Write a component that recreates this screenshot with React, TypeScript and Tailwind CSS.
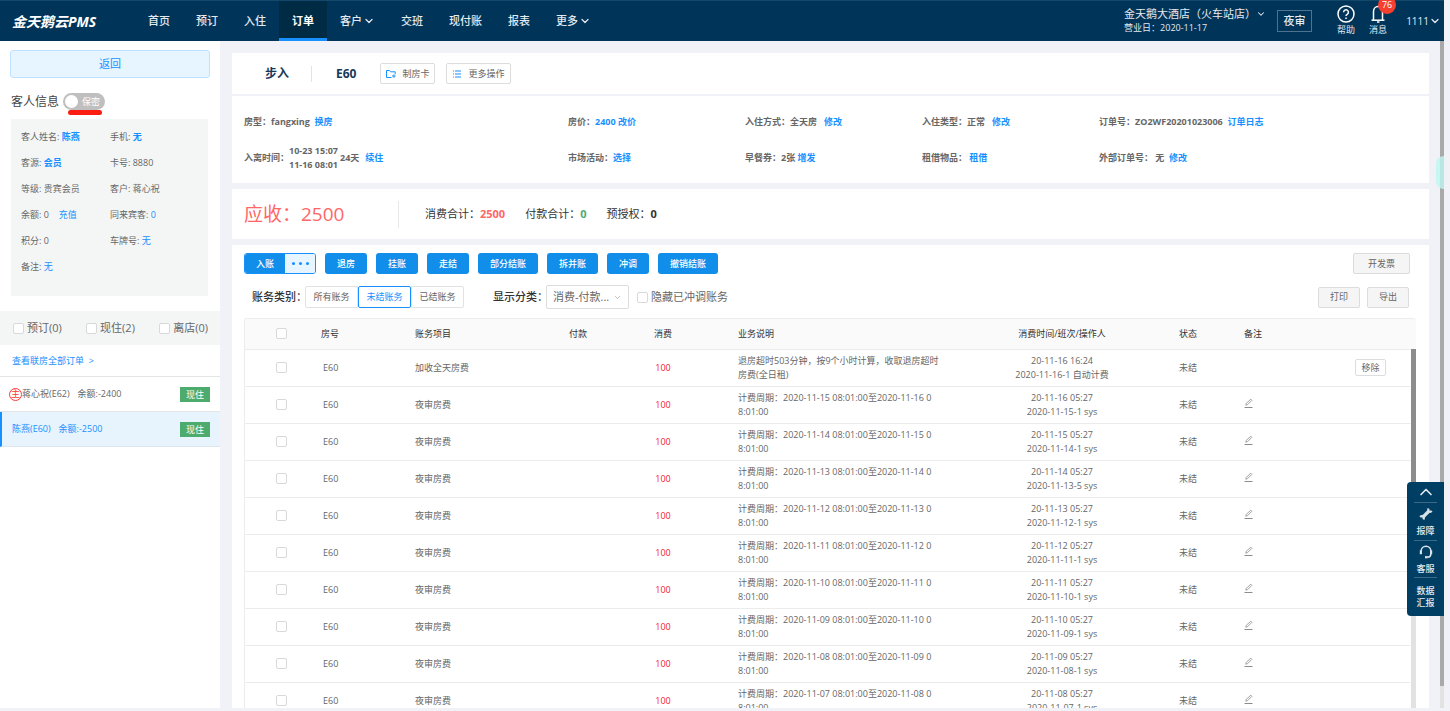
import type { ReactNode } from "react";
import { ChevronDown, ChevronUp } from "lucide-react";

type NavItem = { label: string; active?: boolean; more?: boolean };

const navItems: NavItem[] = [
  { label: "首页" },
  { label: "预订" },
  { label: "入住" },
  { label: "订单", active: true },
  { label: "客户", more: true },
  { label: "交班" },
  { label: "现付账" },
  { label: "报表" },
  { label: "更多", more: true },
];

const actions = ["退房", "挂账", "走结", "部分结账", "拆并账", "冲调", "撤销结账"];

const bills = [
  {
    item: "加收全天房费",
    note: "退房超时503分钟，按9个小时计算，收取退房超时\n房费(全日租)",
    time: "20-11-16 16:24",
    shift: "2020-11-16-1 自动计费",
    removable: true,
  },
  ...[
    ["15", "16", "20-11-16 05:27", "2020-11-15-1 sys"],
    ["14", "15", "20-11-15 05:27", "2020-11-14-1 sys"],
    ["13", "14", "20-11-14 05:27", "2020-11-13-5 sys"],
    ["12", "13", "20-11-13 05:27", "2020-11-12-1 sys"],
    ["11", "12", "20-11-12 05:27", "2020-11-11-1 sys"],
    ["10", "11", "20-11-11 05:27", "2020-11-10-1 sys"],
    ["09", "10", "20-11-10 05:27", "2020-11-09-1 sys"],
    ["08", "09", "20-11-09 05:27", "2020-11-08-1 sys"],
    ["07", "08", "20-11-08 05:27", "2020-11-07-1 sys"],
  ].map(([from, to, time, shift]) => ({
    item: "夜审房费",
    note: `计费周期：2020-11-${from} 08:01:00至2020-11-${to} 0\n8:01:00`,
    time,
    shift,
    removable: false,
  })),
];

function Check({ label }: { label: string }) {
  return (
    <input
      type="checkbox"
      aria-label={label}
      className="block size-[11px] shrink-0 appearance-none rounded-[2px] border border-[#d9d9d9] bg-white checked:bg-[#1890ff]"
    />
  );
}

function Action({ children, strong }: { children: ReactNode; strong?: boolean }) {
  return (
    <a href="#" className={strong ? "font-bold text-[#1890ff]" : "text-[#1890ff]"}>
      {children}
    </a>
  );
}

function EditIcon() {
  return (
    <svg viewBox="0 0 9 10" className="h-[10px] w-[9px]" fill="none" stroke="#8c8c8c" strokeWidth="0.8">
      <path d="M0.5 9.5h8" strokeWidth="1" />
      <path d="M1.8 7.2l.4-1.8 4.6-4.2 1.1 1.1-4.4 4.4z" />
    </svg>
  );
}

function Header() {
  return (
    <header className="flex h-[41px] shrink-0 items-stretch border-t border-[#14486b] bg-[#003459] pr-[3px] text-[#e3eaf0]">
      <div className="flex w-[135px] shrink-0 items-center pl-3 text-[14px] font-bold italic text-white">
        金天鹅云PMS
      </div>
      <nav className="flex" aria-label="主导航">
        {navItems.map((item) => (
          <a
            key={item.label}
            href="#"
            className={
              item.active
                ? "flex items-center border-b-[3px] border-[#1890ff] bg-[#002b45] px-[13px] pt-[3px] text-[11px] font-bold text-white"
                : "flex items-center px-[13px] text-[11px] font-medium"
            }
          >
            {item.label}
            {item.more ? <ChevronDown size={12} strokeWidth={2.5} className="ml-px" /> : null}
          </a>
        ))}
      </nav>
      <div className="ml-auto flex items-center">
        <div className="mr-[11px] leading-[14px]">
          <a href="#" className="flex items-center text-[11px]">
            金天鹅大酒店（火车站店）
            <ChevronDown size={10} strokeWidth={2.5} />
          </a>
          <p className="text-[9px]">营业日：2020-11-17</p>
        </div>
        <button type="button" className="h-[22px] w-[35px] border border-[#4d7390] text-[11px] font-medium">
          夜审
        </button>
        <a href="#" className="ml-[25px] flex flex-col items-center text-[9px] leading-[14px]">
          <svg viewBox="0 0 18 18" className="size-[18px]" fill="none" stroke="white" strokeWidth="1.5">
            <circle cx="9" cy="9" r="8" />
            <path d="M6.6 7.2a2.4 2.4 0 1 1 3.6 2.1c-.9.5-1.2.9-1.2 1.8" />
            <path d="M9 12.4v1.6" />
          </svg>
          帮助
        </a>
        <a href="#" className="relative ml-[14px] flex flex-col items-center text-[9px] leading-[14px]">
          <svg viewBox="0 0 18 18" className="size-[18px]" fill="none" stroke="white" strokeWidth="1.5">
            <path d="M4.5 15V6.5a4.5 5 0 0 1 9 0V15" />
            <path d="M2.5 15.2h13" />
            <path d="M8 17h2.5" />
          </svg>
          消息
          <span className="absolute -top-[9px] left-[9px] flex h-[18px] w-[18px] items-center justify-center rounded-full bg-[#f5402f] text-[9px] text-white">
            76
          </span>
        </a>
        <a href="#" className="ml-[19px] flex items-center text-[10px]">
          1111
          <ChevronDown size={12} strokeWidth={2.5} />
        </a>
      </div>
    </header>
  );
}

function Guest() {
  return (
    <dl className="mt-2 mr-3 ml-[11px] grid h-[177px] grid-cols-[89px_1fr] content-start bg-[#f4f6f6] pt-[5px] pl-[10px] leading-[26px]">
      <div>客人姓名: <Action strong>陈燕</Action></div>
      <div>手机: <Action strong>无</Action></div>
      <div>客源: <Action strong>会员</Action></div>
      <div>卡号: 8880</div>
      <div>等级: 贵宾会员</div>
      <div>客户: 蒋心祝</div>
      <div className="flex gap-[10px]">余额: 0 <Action>充值</Action></div>
      <div>同来宾客: <Action>0</Action></div>
      <div>积分: 0</div>
      <div>车牌号: <Action>无</Action></div>
      <div>备注: <Action>无</Action></div>
    </dl>
  );
}

function Sidebar() {
  return (
    <aside className="w-[220px] shrink-0 bg-white text-[9px] text-[#666]">
      <div className="px-[10px] pt-[9px]">
        <button
          type="button"
          className="h-7 w-full rounded-[3px] border border-[#bfe1ff] bg-[#e6f5ff] text-[11px] text-[#1890ff]"
        >
          返回
        </button>
      </div>
      <div className="mt-[14px] flex h-[19px] items-center pl-[11px] text-[12px] text-[#444]">
        客人信息
        <button
          type="button"
          role="switch"
          aria-checked="false"
          className="relative ml-1 flex h-[17px] w-[42px] items-center rounded-full bg-[#bfbfbf] pl-[2px] text-[9px] text-white"
        >
          <span className="mr-1 size-[13px] rounded-full bg-white" />
          保密
          <span className="absolute top-[17px] left-[5px] h-[5px] w-[34px] rounded-full bg-[#fb1d12]" />
        </button>
      </div>
      <Guest />
      <div className="mt-[15px] flex h-[34px] items-center justify-between bg-[#f4f6f6] pr-3 pl-[13px] text-[11px]">
        {["预订(0)", "现住(2)", "离店(0)"].map((name) => (
          <label key={name} className="flex items-center gap-[3px]">
            <Check label={name} />
            {name}
          </label>
        ))}
      </div>
      <a href="#" className="flex h-8 items-center border-b border-[#e4e6e6] pl-3 text-[#1890ff]">
        查看联房全部订单 &nbsp;&gt;
      </a>
      <a href="#" className="flex h-[35px] items-center border-b border-[#e4e6e6] pr-[10px] pl-[9px]">
        <span className="flex size-[13px] items-center justify-center rounded-full border border-[#ff3b3b] text-[#ff3b3b]">
          主
        </span>
        蒋心祝(E62)
        <span className="ml-2">余额:-2400</span>
        <span className="ml-auto bg-[#4dab6d] px-[6px] leading-[15px] text-white">现住</span>
      </a>
      <a
        href="#"
        className="flex h-[35px] items-center border-b border-l-2 border-b-[#dde6ec] border-l-[#1890ff] bg-[#e8f4fd] pr-[10px] pl-[10px] text-[#1890ff]"
      >
        陈燕(E60)
        <span className="ml-2">余额:-2500</span>
        <span className="ml-auto bg-[#4dab6d] px-[6px] leading-[15px] text-white">现住</span>
      </a>
    </aside>
  );
}

function OrderTitle() {
  return (
    <section className="flex h-[41px] items-center bg-white pl-[33px] text-[12px] font-bold text-[#17395a]">
      <h1>步入</h1>
      <span className="mr-6 ml-[22px] h-4 w-px bg-[#e3e3e3]" />
      <span>E60</span>
      <button
        type="button"
        className="ml-6 flex h-[21px] items-center gap-[6px] rounded-[2px] border border-[#ddd] px-[5px] text-[9px] font-normal text-[#666]"
      >
        <svg viewBox="0 0 10 10" className="size-[10px]" fill="none" stroke="#1890ff" strokeWidth="1">
          <path d="M5.5 8.5h-5v-7h3l1 1.3h4.7v2.4" />
          <path d="M6 7h3.5M8 5.5v3.3" />
        </svg>
        制房卡
      </button>
      <button
        type="button"
        className="ml-[11px] flex h-[21px] items-center gap-[6px] rounded-[2px] border border-[#ddd] px-[5px] text-[9px] font-normal text-[#666]"
      >
        <svg viewBox="0 0 10 10" className="size-[10px]" fill="none" stroke="#1890ff" strokeWidth="1">
          <path d="M3 2h6M3 5h6M3 8h6" />
          <path d="M1 2h1M1 5h1M1 8h1" />
        </svg>
        更多操作
      </button>
    </section>
  );
}

function OrderInfo() {
  return (
    <section className="mt-[2px] grid h-[87px] grid-cols-[324fr_177fr_177fr_177fr_318fr] grid-rows-2 content-center items-center bg-white px-3 py-[7px] text-[9px] font-bold text-[#666]">
      <div>房型：fangxing &nbsp;<Action>换房</Action></div>
      <div>房价：<Action>2400 改价</Action></div>
      <div>入住方式：全天房 &nbsp; <Action>修改</Action></div>
      <div>入住类型：正常 &nbsp; <Action>修改</Action></div>
      <div>订单号：ZO2WF20201023006 &nbsp;<Action>订单日志</Action></div>
      <div className="flex items-center">
        入离时间：
        <span className="leading-[14px]">
          10-23 15:07
          <br />
          11-16 08:01
        </span>
        <span className="mr-[6px] ml-[2px]">24天</span>
        <Action>续住</Action>
      </div>
      <div>市场活动：<Action>选择</Action></div>
      <div>早餐券：2张 <Action>增发</Action></div>
      <div>租借物品： <Action>租借</Action></div>
      <div>外部订单号： 无 &nbsp;<Action>修改</Action></div>
    </section>
  );
}

function Totals() {
  return (
    <section className="mt-[6px] flex h-[50px] items-center bg-white pl-3 text-[11px] text-[#333]">
      <p className="w-[154px] text-[19px] text-[#ff6666]">应收：2500</p>
      <span className="mr-[26px] h-[27px] w-px bg-[#e8e8e8]" />
      <p>消费合计：<b className="text-[#ff6666]">2500</b></p>
      <p className="ml-5">付款合计：<b className="text-[#4dab6d]">0</b></p>
      <p className="ml-5">预授权：<b>0</b></p>
    </section>
  );
}

function BillTable() {
  return (
    <div className="relative mt-[9px] min-h-0 flex-1 overflow-hidden rounded-t-[3px] border-t border-l border-[#ececec]">
      <table className="w-full table-fixed border-collapse text-[9px] text-[#666]">
        <colgroup>
          <col className="w-[72px]" />
          <col className="w-[98px]" />
          <col className="w-[120px]" />
          <col className="w-[86px]" />
          <col className="w-[84px]" />
          <col />
          <col className="w-[204px]" />
          <col className="w-[48px]" />
          <col className="w-[82px]" />
          <col className="w-[122px]" />
        </colgroup>
        <thead>
          <tr className="h-[30px] border-b border-[#ececec] bg-[#fafafa] text-[#333] [&>th]:font-normal">
            <th><div className="flex justify-center"><Check label="全选" /></div></th>
            <th className="pl-1 text-left">房号</th>
            <th className="text-left">账务项目</th>
            <th>付款</th>
            <th>消费</th>
            <th className="pl-[33px] text-left">业务说明</th>
            <th>消费时间/班次/操作人</th>
            <th>状态</th>
            <th>备注</th>
            <th aria-label="操作" />
          </tr>
        </thead>
        <tbody>
          {bills.map((bill) => (
            <tr key={bill.time} className="h-[37px] border-b border-[#ececec] leading-[14px]">
              <td><div className="flex justify-center"><Check label={bill.time} /></div></td>
              <td className="pl-[6px]">E60</td>
              <td>{bill.item}</td>
              <td />
              <td className="text-center text-[#f5222d]">100</td>
              <td className="pl-[33px] whitespace-pre">{bill.note}</td>
              <td className="text-center">
                {bill.time}
                <br />
                {bill.shift}
              </td>
              <td className="text-center">未结</td>
              <td>
                {bill.removable ? null : (
                  <button type="button" aria-label="编辑备注" className="mb-1 ml-8 block">
                    <EditIcon />
                  </button>
                )}
              </td>
              <td className="pr-[30px] text-right">
                {bill.removable ? (
                  <button type="button" className="h-[17px] w-[31px] rounded-[2px] border border-[#ddd]">
                    移除
                  </button>
                ) : null}
              </td>
            </tr>
          ))}
        </tbody>
      </table>
      <div className="absolute top-[30px] right-0 bottom-0 w-[5px] bg-[#e2e2e2]">
        <div className="h-[150px] bg-[#8c8c8c]" />
      </div>
    </div>
  );
}

function Bills() {
  return (
    <section className="mt-[6px] flex min-h-0 flex-1 flex-col bg-white pt-2 pr-[13px] pl-3 text-[9px]">
      <div className="flex items-center gap-[9px] pr-[6px]">
        <div className="flex h-[21px] w-[72px] overflow-hidden rounded-[3px] border border-[#1890ff]">
          <button type="button" className="w-10 bg-[#108ee9] font-medium text-white">入账</button>
          <button
            type="button"
            aria-label="更多入账"
            className="flex flex-1 items-center justify-center gap-1 bg-[#e6f5ff]"
          >
            <span className="size-[3px] rounded-full bg-[#1890ff]" />
            <span className="size-[3px] rounded-full bg-[#1890ff]" />
            <span className="size-[3px] rounded-full bg-[#1890ff]" />
          </button>
        </div>
        {actions.map((name) => (
          <button
            key={name}
            type="button"
            className="h-[21px] rounded-[3px] bg-[#108ee9] px-3 font-medium text-white"
          >
            {name}
          </button>
        ))}
        <button
          type="button"
          className="ml-auto h-[21px] w-[57px] rounded-[2px] border border-[#dcdcdc] bg-[#f5f5f5] text-[#666]"
        >
          开发票
        </button>
      </div>
      <div className="mt-[11px] flex h-6 items-center pr-[7px] pl-2 text-[11px] text-[#666]">
        <span className="w-[53px] font-medium whitespace-nowrap text-[#333]">账务类别：</span>
        <div className="flex text-[9px]">
          <button type="button" className="h-[22px] w-[53px] rounded-l-[2px] border border-[#e2e2e2]">所有账务</button>
          <button type="button" className="h-[22px] w-[53px] rounded-[2px] border border-[#1890ff] text-[#1890ff]">
            未结账务
          </button>
          <button type="button" className="h-[22px] w-[53px] rounded-r-[2px] border border-[#e2e2e2]">已结账务</button>
        </div>
        <label htmlFor="category" className="ml-[29px] w-[53px] font-medium whitespace-nowrap text-[#333]">
          显示分类：
        </label>
        <div className="relative">
          <select
            id="category"
            className="block h-6 w-[83px] appearance-none rounded-[2px] border border-[#dcdcdc] bg-white pl-[6px] text-[11px] text-[#666]"
          >
            <option>消费-付款...</option>
          </select>
          <ChevronDown size={9} className="pointer-events-none absolute top-[8px] right-[7px] text-[#aaa]" />
        </div>
        <label className="ml-2 flex items-center gap-[3px]">
          <Check label="隐藏已冲调账务" />
          隐藏已冲调账务
        </label>
        <div className="ml-auto flex gap-[7px] text-[9px]">
          <button type="button" className="h-[21px] w-[42px] rounded-[2px] border border-[#dcdcdc] bg-[#f5f5f5]">
            打印
          </button>
          <button type="button" className="h-[21px] w-[42px] rounded-[2px] border border-[#dcdcdc] bg-[#f5f5f5]">
            导出
          </button>
        </div>
      </div>
      <BillTable />
    </section>
  );
}

function FloatPanel() {
  return (
    <div className="absolute top-[482px] right-[6px] flex h-[134px] w-[37px] flex-col items-center rounded-l-[4px] bg-[#003f63] px-[7px] text-[9px] font-medium text-[#e3eaf0]">
      <button type="button" aria-label="收起" className="flex h-5 w-full items-center justify-center">
        <ChevronUp size={20} strokeWidth={2} />
      </button>
      <button
        type="button"
        className="flex h-[38px] w-full flex-col items-center border-t border-[#3b6a87] pt-1 whitespace-nowrap"
      >
        <svg viewBox="0 0 14 14" className="size-[14px] shrink-0" fill="none" stroke="#d7e2ea">
          <path d="M4 10L10 4" strokeWidth="3.2" />
          <path d="M9.6 1.6A2.6 2.6 0 0 0 10 4.6 2.6 2.6 0 0 0 12.8 4" strokeWidth="2.2" />
          <path d="M4.4 12.4A2.6 2.6 0 0 0 4 9.4 2.6 2.6 0 0 0 1.2 10" strokeWidth="2.2" />
        </svg>
        <span className="leading-[20px]">报障</span>
      </button>
      <button
        type="button"
        className="flex h-[37px] w-full flex-col items-center border-t border-[#3b6a87] pt-1 whitespace-nowrap"
      >
        <svg viewBox="0 0 14 14" className="size-[14px] shrink-0" fill="none" stroke="#d7e2ea" strokeWidth="1.5">
          <path d="M2.2 9V6a4.8 4.8 0 0 1 9.6 0v3c0 1.8-1.4 3.2-3.2 3.2" />
          <path d="M1.8 5.2v4M12.2 5.2v4" strokeWidth="2" />
          <path d="M6 12.2h2.8" strokeWidth="2.2" />
        </svg>
        <span className="leading-[20px]">客服</span>
      </button>
      <button type="button" className="w-full flex-1 border-t border-[#3b6a87] leading-[12px] whitespace-nowrap">
        数据
        <br />
        汇报
      </button>
    </div>
  );
}

export default function App() {
  return (
    <div className="relative flex h-screen flex-col overflow-hidden bg-[#f0f2f7] pr-[6px] pb-[3px] font-['Open_Sans','Noto_Sans_CJK_SC',sans-serif]">
      <Header />
      <div className="flex min-h-0 flex-1">
        <Sidebar />
        <main className="flex min-w-0 flex-1 flex-col pt-3 pr-[11px] pl-3">
          <OrderTitle />
          <OrderInfo />
          <Totals />
          <Bills />
        </main>
        <div className="w-[4px] shrink-0 bg-[#e2e2e2]">
          <div className="h-[645px] bg-[#a9a9a9]" />
        </div>
      </div>
      <div className="absolute top-[156px] right-[6px] h-[33px] w-2 rounded-l-full bg-[#bdf8f1]/80" />
      <FloatPanel />
    </div>
  );
}
